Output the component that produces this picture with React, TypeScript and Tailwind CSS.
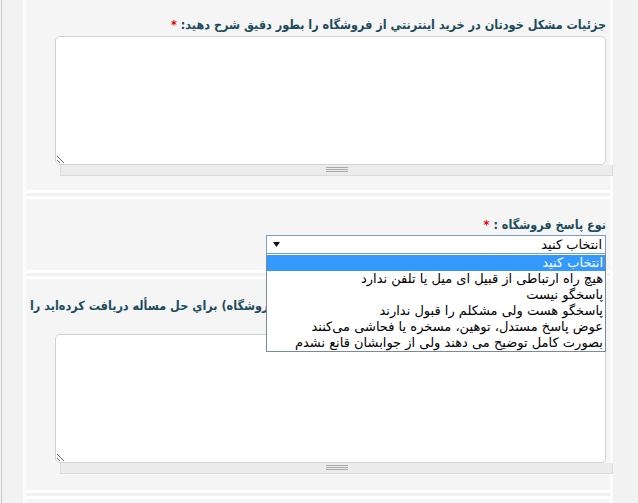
import React from "react";

const items = [
  "انتخاب کنید",
  "هیچ راه ارتباطی از قبیل ای میل یا تلفن ندارد",
  "پاسخگو نیست",
  "پاسخگو هست ولی مشکلم را قبول ندارند",
  "عوض پاسخ مستدل، توهین، مسخره یا فحاشی می‌کنند",
  "بصورت کامل توضیح می دهند ولی از جوابشان قانع نشدم",
];

function Grippie() {
  return (
    <div className="ml-[34px] w-[553px] h-[11px] bg-[#ececec] border border-[#dcdcdc] border-t-0 flex items-center justify-center">
      <svg width="22" height="6" viewBox="0 0 22 6">
        <line x1="0" y1="0.5" x2="22" y2="0.5" stroke="#a9a9a9" strokeWidth="1" />
        <line x1="0" y1="2.5" x2="22" y2="2.5" stroke="#a9a9a9" strokeWidth="1" />
        <line x1="0" y1="4.5" x2="22" y2="4.5" stroke="#a9a9a9" strokeWidth="1" />
      </svg>
    </div>
  );
}

function Area() {
  return (
    <div>
      <textarea
        dir="rtl"
        className="block ml-[29px] w-[551px] h-[129px] bg-white border border-[#d2d2d2] rounded-[5px] outline-none"
      />
      <Grippie />
    </div>
  );
}

const labelCls =
  "text-[12.5px] leading-[14px] font-bold text-[#1c4b5c] whitespace-nowrap font-['DejaVu_Sans_Condensed','DejaVu_Sans',sans-serif]";

export default function App() {
  return (
    <div className="w-[638px] h-[503px] overflow-hidden bg-[#f2f2f2] flex font-['DejaVu_Sans',sans-serif]">
      <div className="w-px ml-px bg-[#c9c9c9] shrink-0" />
      <div className="w-[21px] shrink-0" />
      <div className="w-[590px] shrink-0 border-x-[3px] border-[#fcfcfc] flex flex-col gap-[3px]">
        {/* panel 1 */}
        <div className="h-[193px] shrink-0 bg-[#f5f5f5] border-b-[3px] border-white px-[4px]">
          <div dir="rtl" className={"pt-[18px] " + labelCls}>
            جزئيات مشكل خودتان در خريد اينترنتي از فروشگاه را بطور دقيق شرح دهيد:{" "}
            <span className="text-[#e60000]">*</span>
          </div>
          <div className="mt-[4px] -mx-[4px]">
            <Area />
          </div>
        </div>

        {/* panel 2 */}
        <div className="h-[77px] shrink-0 bg-[#f5f5f5] border-y-[3px] border-white px-[4px] relative z-10">
          <div dir="rtl" className={"pt-[19px] " + labelCls}>
            نوع پاسخ فروشگاه : <span className="text-[#e60000]">*</span>
          </div>
          <div className="mt-[3px] ml-[236px] w-[340px] relative">
            <div className="h-[19px] bg-white border border-[#7b9bc9] flex items-center justify-between pl-[6px] pr-[3px]">
              <svg width="7" height="5" viewBox="0 0 7 5">
                <polygon points="0,0 7,0 3.5,5" fill="#111" />
              </svg>
              <span dir="rtl" className="text-[13px] leading-[17px] text-black">
                انتخاب کنید
              </span>
            </div>
            <div className="absolute left-0 top-[19px] w-[340px] bg-white border border-[#7a8a99] border-t-0 pt-px">
              {items.map((t, i) => (
                <div
                  key={i}
                  dir="rtl"
                  className={
                    i === 0
                      ? "h-[16px] leading-[16px] pr-[2px] text-[13px] bg-[#3399ff] text-white whitespace-nowrap"
                      : "h-[16px] leading-[16px] pr-[2px] text-[13px] text-black whitespace-nowrap"
                  }
                >
                  {t}
                </div>
              ))}
            </div>
          </div>
        </div>

        {/* panel 3 */}
        <div className="h-[217px] shrink-0 bg-[#f5f5f5] border-y-[3px] border-white px-[4px]">
          <div className="pt-[20px] h-[55px]">
            <div dir="rtl" className={"text-left " + labelCls}>
              متن پاسخي كه از طرف پشتيباني (فروشگاه) براي حل مسأله دريافت كرده‌ايد را
            </div>
          </div>
          <div className="-mx-[4px]">
            <Area />
          </div>
        </div>

        {/* panel 4 */}
        <div className="h-[40px] shrink-0 bg-[#f5f5f5] border-t-[3px] border-white" />
      </div>
    </div>
  );
}
